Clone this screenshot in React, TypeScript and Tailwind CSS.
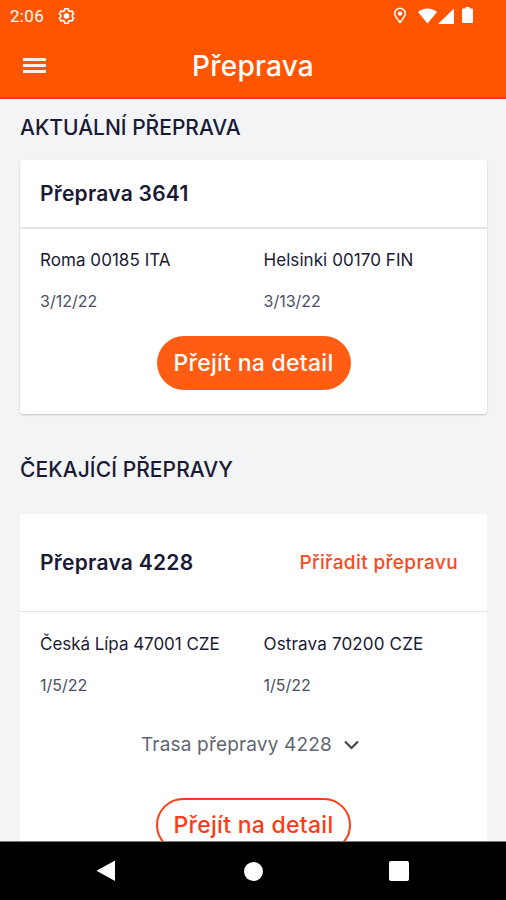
import type { ReactNode } from "react";

function StatusBar() {
  return (
    <div className="flex h-8 items-center justify-between pr-[33px] pl-[10px]">
      <div className="flex items-center gap-[14px]">
        <span className="font-['Roboto',sans-serif] text-[17px] leading-none tracking-[0.3px]">2:06</span>
        <svg width="17" height="18" viewBox="0 0 18 18" fill="none" stroke="currentColor" strokeLinejoin="round">
          <path
            d="M7.2 1.3h3.6l.5 2.2 1.4.8 2.1-.7 1.8 3.1-1.6 1.5v1.6l1.6 1.5-1.8 3.1-2.1-.7-1.4.8-.5 2.2H7.2l-.5-2.2-1.4-.8-2.1.7-1.8-3.1L3 9.8V8.2L1.4 6.7l1.8-3.1 2.1.7 1.4-.8z"
            strokeWidth="1.7"
          />
          <circle cx="9" cy="9" r="3" fill="currentColor" stroke="none" />
        </svg>
      </div>
      <div className="flex items-center">
        <svg width="14" height="18" viewBox="0 0 14 18" fill="none" stroke="currentColor">
          <path d="M7 15.500C4 11.500 1.700 9.200 1.700 6.600a5.300 5.300 0 0 1 10.600 0C12.300 9.200 10 11.500 7 15.500z" strokeWidth="1.5" />
          <circle cx="7" cy="6.600" r="2.200" fill="currentColor" stroke="none" />
        </svg>
        <svg className="ml-[11px]" width="19" height="17" viewBox="0 0 19 17" fill="currentColor">
          <path d="M0 4C5.500-.8 13.500-.8 19 4L9.500 15.500z" />
        </svg>
        <svg className="ml-px" width="16" height="17" viewBox="0 0 16 17" fill="currentColor">
          <path d="M16 .5v15.500H0z" />
        </svg>
        <svg className="ml-[8px]" width="11" height="18" viewBox="0 0 11 18" fill="currentColor">
          <path d="M3.500 0h4v1.500H10a1 1 0 0 1 1 1V15a1 1 0 0 1-1 1H1a1 1 0 0 1-1-1V2.500a1 1 0 0 1 1-1h2.500z" />
        </svg>
      </div>
    </div>
  );
}

function Header() {
  return (
    <header className="h-[99px] shrink-0 border-b-2 border-[#e8401a] bg-[#ff5500] text-white">
      <StatusBar />
      <div className="grid h-[66px] grid-cols-[1fr_auto_1fr] items-center">
        <button aria-label="Menu" className="ml-[23px] flex w-[23px] flex-col gap-[3px]">
          <span className="h-[3px] w-full bg-white/90" />
          <span className="h-[3px] w-full bg-white/90" />
          <span className="h-[3px] w-full bg-white/90" />
        </button>
        <h1 className="pt-px text-[28px] leading-none font-medium tracking-[0.25px]">Přeprava</h1>
      </div>
    </header>
  );
}

function Stop({ place, date }: { place: ReactNode; date: string }) {
  return (
    <div>
      <p className="text-[17px] leading-5 whitespace-nowrap">{place}</p>
      <p className="mt-[21px] text-[16px] leading-5 text-[#4b4f60]">{date}</p>
    </div>
  );
}

export default function App() {
  return (
    <div className="flex h-[900px] w-[506px] flex-col overflow-hidden bg-[#f3f4f6] font-['Inter',sans-serif] text-[#1a1a35]">
      <Header />

      <main className="min-h-0 flex-1 overflow-hidden px-5 pr-[19px]">
        <h2 className="mt-[17px] text-[21px] leading-6 font-medium whitespace-nowrap">AKTUÁLNÍ PŘEPRAVA</h2>

        <section className="mt-[20px] h-[254px] rounded-[3px] bg-white shadow-[0_1px_2px_rgba(0,0,0,0.2)]">
          <div className="flex h-[69px] items-center border-b-2 border-[#e4e5e7] px-5 pt-px">
            <h3 className="text-[21px] leading-6 font-semibold tracking-[0.25px]">Přeprava 3641</h3>
          </div>
          <div className="grid grid-cols-[223.5px_1fr] px-5 pt-[21px]">
            <Stop place={<span className="tracking-[0.05px]">Roma 00185 ITA</span>} date="3/12/22" />
            <Stop place={<span className="tracking-[0.07px]">Helsinki 00170 FIN</span>} date="3/13/22" />
          </div>
          <div className="mt-[25px] flex justify-center">
            <button className="h-[54px] w-[194px] rounded-full bg-[#ff5c14] text-[23px] leading-none font-medium tracking-[0.27px] whitespace-nowrap text-white">
              Přejít na detail
            </button>
          </div>
        </section>

        <h2 className="mt-[44px] text-[21px] leading-6 font-medium tracking-[0.08px] whitespace-nowrap">
          ČEKAJÍCÍ PŘEPRAVY
        </h2>

        <section className="mt-[32px] h-[400px] rounded-[3px] bg-white">
          <div className="flex h-[98px] items-center justify-between border-b border-[#e4e5e7] pr-[29px] pl-5">
            <h3 className="text-[21px] leading-6 font-semibold tracking-[0.27px]">Přeprava 4228</h3>
            <a className="text-[19px] leading-6 font-medium tracking-[0.36px] text-[#ff4720]">Přiřadit přepravu</a>
          </div>
          <div className="grid grid-cols-[223.5px_1fr] px-5 pt-[22px]">
            <Stop place={<span className="tracking-[-0.04px]">Česká Lípa 47001 CZE</span>} date="1/5/22" />
            <Stop place={<span className="tracking-[0.17px]">Ostrava 70200 CZE</span>} date="1/5/22" />
          </div>
          <div className="mt-[38px] ml-[121px] flex items-center text-[19px] leading-6 text-[#62666f]">
            <span className="w-[203px] tracking-[0.17px] whitespace-nowrap">Trasa přepravy 4228</span>
            <svg width="15" height="10" viewBox="0 0 15 10" fill="none" stroke="#41454f" strokeWidth="2.200">
              <path d="M1 1.500l6.500 6.500L14 1.500" />
            </svg>
          </div>
          <div className="mt-[41px] flex justify-center">
            <button className="h-[54px] w-[195px] rounded-full border-2 border-[#ff3d14] pt-px text-[23px] leading-none font-medium tracking-[0.27px] whitespace-nowrap text-[#ff3a14]">
              Přejít na detail
            </button>
          </div>
        </section>
      </main>

      <nav className="flex h-[59px] shrink-0 items-center border-t border-[#777] bg-black pl-[96px] text-white">
        <svg width="19" height="22" viewBox="0 0 19 22" fill="currentColor">
          <path d="M19 .5v20.500L.5 10.700z" />
        </svg>
        <span className="ml-[129px] size-[19px] rounded-full bg-white" />
        <span className="ml-[126px] size-[20px] rounded-[2px] bg-white" />
      </nav>
    </div>
  );
}
